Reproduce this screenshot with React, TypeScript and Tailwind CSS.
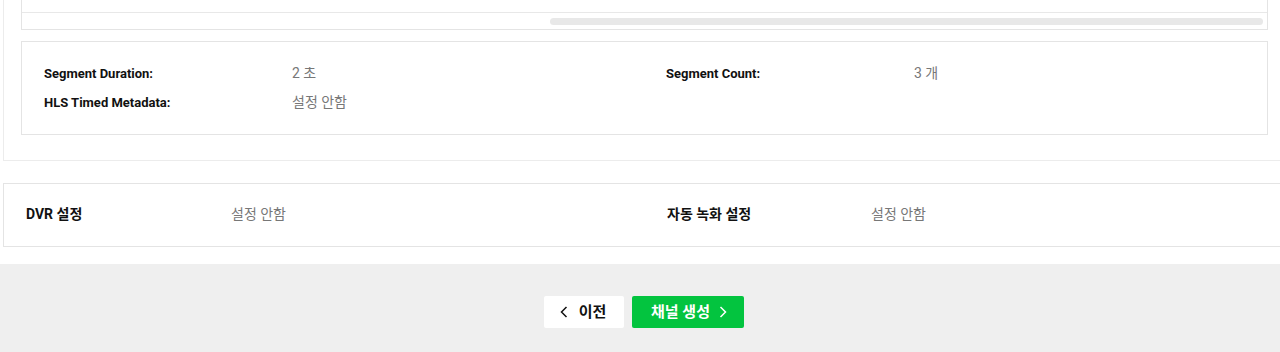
export default function App() {
    const font = { fontFamily: 'Roboto, "Noto Sans CJK KR", sans-serif' };

    return (
        <div className="w-[1280px] h-[352px] overflow-hidden bg-white" style={font}>
            {/* stream settings panel (scrolled, top cut off) */}
            <div className="ml-[3px] w-[1300px] border-l border-r border-b border-[#ececec] pl-[17px] pb-[25px]">
                <div className="w-[1247px] h-[30px] border-l border-r border-b border-[#e4e4e4]">
                    <div className="h-[13px] border-b border-[#e8e8e8]" />
                    <div className="flex pt-[5px] pl-[528px] pr-[4px]">
                        <div className="h-[7px] w-full rounded-full bg-[#e8e8e8]" />
                    </div>
                </div>

                <div className="mt-[11px] w-[1247px] border border-[#e4e4e4] pl-[22px] pt-[17px] pb-[17px] text-[13px]">
                    <div className="grid h-[29px] grid-cols-[248px_374px_248px_1fr] items-center">
                        <span className="font-bold text-[#111]">Segment Duration:</span>
                        <span className="text-[14px] text-[#777]">2 초</span>
                        <span className="font-bold text-[#111]">Segment Count:</span>
                        <span className="text-[14px] text-[#777]">3 개</span>
                    </div>
                    <div className="grid h-[29px] grid-cols-[248px_374px_248px_1fr] items-center">
                        <span className="font-bold text-[#111]">HLS Timed Metadata:</span>
                        <span className="text-[14px] text-[#777]">설정 안함</span>
                    </div>
                </div>
            </div>

            {/* DVR / recording */}
            <div className="mt-[22px] ml-[3px] w-[1300px] h-[64px] border border-[#e4e4e4] pl-[22px] grid grid-cols-[205px_436px_204px_1fr] items-center pb-[2px] text-[14px]">
                <span className="font-bold text-[#111]">DVR 설정</span>
                <span className="text-[#777]">설정 안함</span>
                <span className="font-bold text-[#111]">자동 녹화 설정</span>
                <span className="text-[#777]">설정 안함</span>
            </div>

            {/* footer buttons */}
            <div className="mt-[17px] h-[88px] bg-[#efefef] flex justify-center gap-2 pt-8 pl-2">
                <button className="flex h-8 w-20 items-center justify-center gap-[11px] rounded-[2px] bg-white text-[15px] font-bold text-[#111] pr-[2px]">
                    <svg width="8" height="12" viewBox="0 0 8 12" fill="none">
                        <path d="M6.5 1L1.5 6l5 5" stroke="#111" strokeWidth="1.5" />
                    </svg>
                    이전
                </button>
                <button className="flex h-8 w-28 items-center justify-center gap-[9px] rounded-[2px] bg-[#03c43f] text-[15px] font-bold text-white pl-[2px]">
                    채널 생성
                    <svg width="8" height="12" viewBox="0 0 8 12" fill="none">
                        <path d="M1.5 1l5 5-5 5" stroke="#fff" strokeWidth="1.5" />
                    </svg>
                </button>
            </div>
        </div>
    );
}
